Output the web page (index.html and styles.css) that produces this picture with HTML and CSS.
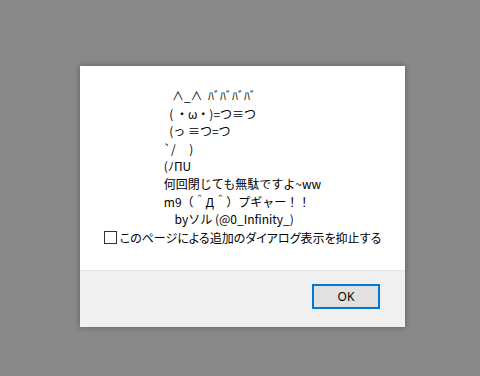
FILE: index.html
```html
<!DOCTYPE html>
<html lang="ja">
<head>
    <meta charset="UTF-8">
    <title>Alert</title>
    <link rel="stylesheet" href="styles.css">
</head>
<body>

<div class="dialog">
    <!-- Message -->
    <div class="dialog-body">
        <div class="message">
            <div class="msg-text">   ∧_∧  ﾊﾞﾊﾞﾊﾞﾊﾞ
  ( ・ω・)=つ≡つ
  (っ ≡つ=つ
`/     )
(ﾉΠU
何回閉じても無駄ですよ~ww
m9（＾Д＾）プギャー！！
    byソル (@0_Infinity_)</div>
        </div>
        <label class="suppress">
            <span class="check-box"></span>
            <span class="suppress-text">このページによる追加のダイアログ表示を抑止する</span>
        </label>
    </div>

    <!-- Buttons -->
    <div class="dialog-footer">
        <button class="ok-btn">OK</button>
    </div>
</div>

</body>
</html>
```

FILE: styles.css
```css
body {
    margin: 0;
    padding: 66px 0 0 80px;
    background-color: #898989;
    font-family: "Noto Sans CJK JP", "Noto Sans", sans-serif;
    height: 376px;
    box-sizing: border-box;
}

.dialog {
    width: 325px;
    background: #fff;
    box-shadow: 0 0 6px rgba(0, 0, 0, 0.35);
}

.dialog-body {
    height: 204px;
    padding-top: 21px;
    box-sizing: border-box;
    display: flex;
    flex-direction: column;
    align-items: center;
}

.message {
    font-size: 12px;
    line-height: 17.6px;
    color: #000;
}

.msg-text {
    white-space: pre;
}

.suppress {
    display: flex;
    align-items: center;
    gap: 3px;
    font-size: 12px;
    line-height: 17.6px;
    color: #000;
    margin-top: 1px;
}

.check-box {
    width: 11px;
    height: 11px;
    border: 1px solid #333;
    background: #fff;
}

.suppress-text {
    font-feature-settings: "palt";
}

.dialog-footer {
    height: 57px;
    background: #f0f0f0;
    border-top: 1px solid #e6e6e6;
    box-sizing: border-box;
    display: flex;
    justify-content: flex-end;
    align-items: flex-start;
    padding: 13px 25px 0 0;
}

.ok-btn {
    width: 68px;
    height: 25px;
    background: #e1e1e1;
    border: 2px solid #0078d7;
    font-family: "Noto Sans", sans-serif;
    font-size: 12px;
    color: #000;
    padding: 0;
}
```
